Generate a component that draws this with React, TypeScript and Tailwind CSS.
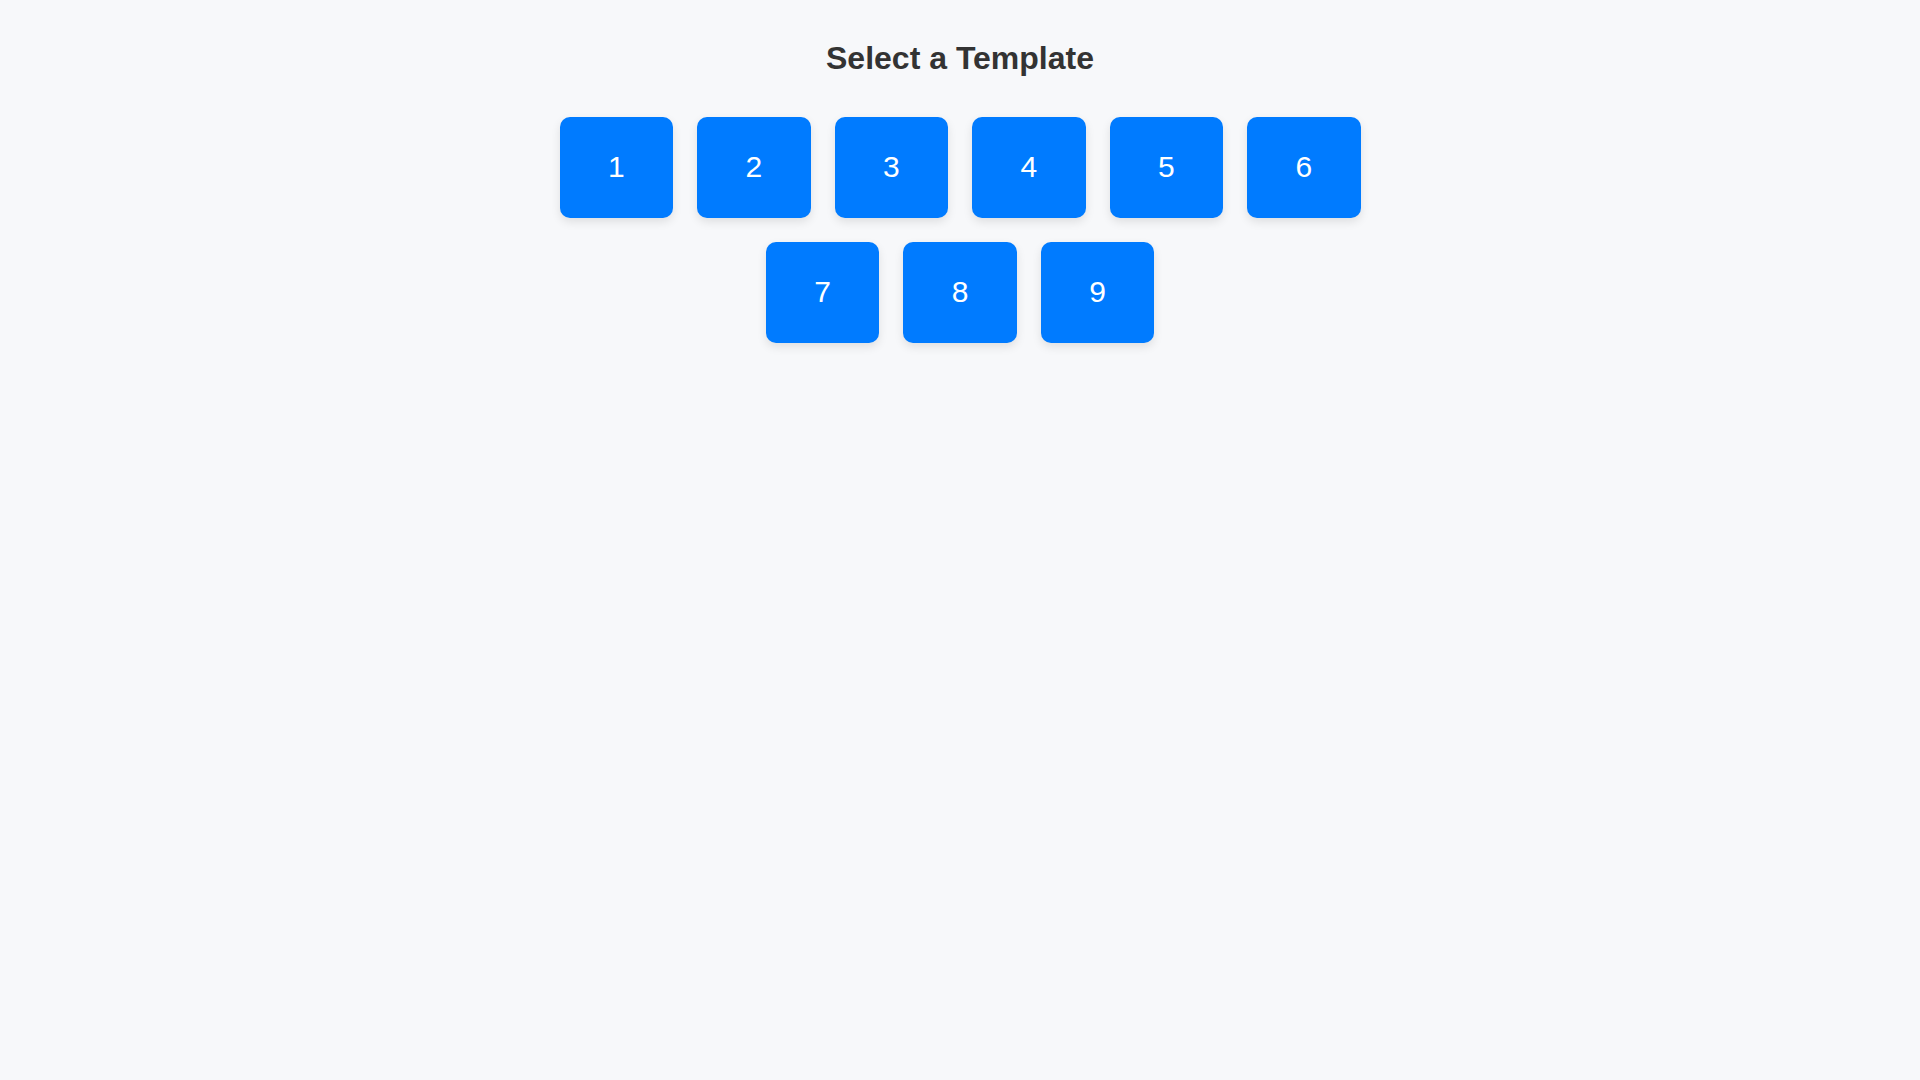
const templates = [1, 2, 3, 4, 5, 6, 7, 8, 9];

export default function App() {
  return (
    <div className="min-h-screen bg-[#f7f8fa] font-['Liberation_Sans',Arial,sans-serif] pt-[40px]">
      <h1 className="text-center text-[32px] leading-[37px] font-bold text-[#333333] mb-[28px]">
        Select a Template
      </h1>
      <div className="mx-auto w-[880px] flex flex-wrap justify-center">
        {templates.map((n) => (
          <button
            key={n}
            className="m-3 w-[113.5px] h-[101px] pb-[2px] rounded-[10px] bg-[#007bff] text-white text-[30px] flex items-center justify-center shadow-[0_4px_10px_rgba(0,0,0,0.1)]"
          >
            {n}
          </button>
        ))}
      </div>
    </div>
  );
}
